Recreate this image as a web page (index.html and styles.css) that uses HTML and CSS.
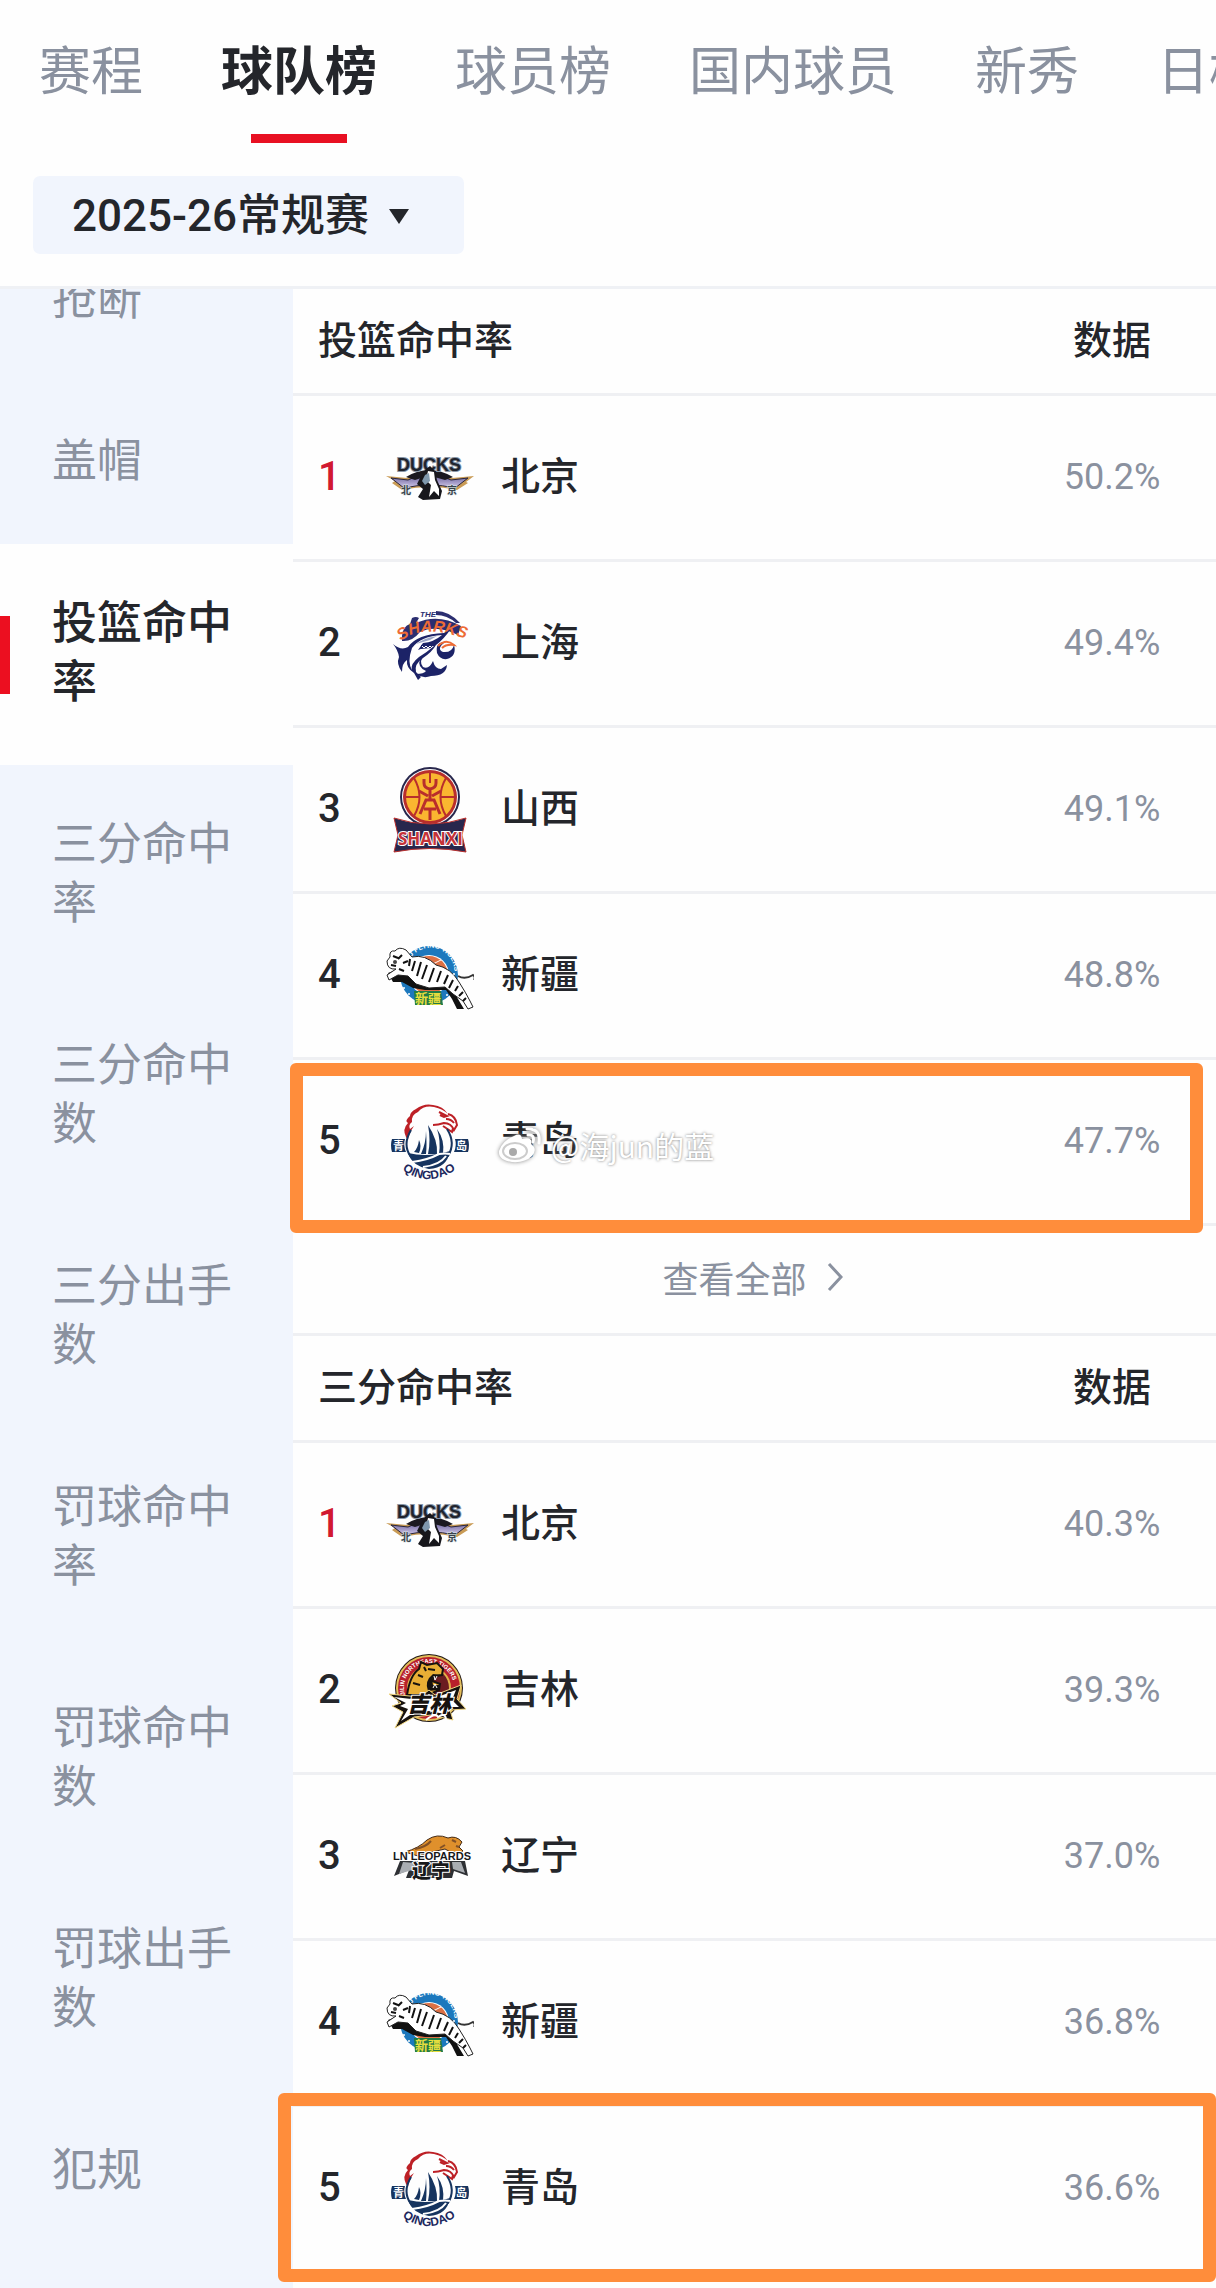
FILE: index.html
```html
<!DOCTYPE html>
<html lang="zh-CN">
<head>
  <meta charset="UTF-8" />
  <meta name="viewport" content="width=device-width, initial-scale=1.0"/>
  <title>球队榜</title>
  <link rel="stylesheet" href="styles.css">
</head>
<body>
  <header class="top">
    <nav class="tabs">
      <a href="#schedule">赛程</a>
      <a href="#teams" class="active">球队榜</a>
      <a href="#players">球员榜</a>
      <a href="#domestic">国内球员</a>
      <a href="#rookies">新秀</a>
      <a href="#daily">日榜</a>
    </nav>
    <div class="season">
      <select name="season" aria-label="赛季">
        <option>2025-26常规赛</option>
      </select>
    </div>
  </header>

  <div class="content">
    <nav class="sidebar">
      <a href="#steals" class="first">抢断</a>
      <a href="#blocks">盖帽</a>
      <a href="#fg" class="active">投篮命中率</a>
      <a href="#tp">三分命中率</a>
      <a href="#tpm">三分命中数</a>
      <a href="#tpa">三分出手数</a>
      <a href="#ft">罚球命中率</a>
      <a href="#ftm">罚球命中数</a>
      <a href="#fta">罚球出手数</a>
      <a href="#fouls">犯规</a>
    </nav>

    <main class="boards">
      <table id="fg">
        <colgroup><col class="col-rank"><col class="col-logo"><col><col class="col-value"></colgroup>
        <thead>
          <tr><th colspan="3" scope="col">投篮命中率</th><th class="value" scope="col">数据</th></tr>
        </thead>
        <tbody>
          <tr>
            <td class="rank top1">1</td>
            <td class="logo">
              <svg viewBox="0 0 88 88">
                <defs>
                  <linearGradient id="wing" x1="0" y1="0" x2="0" y2="1">
                    <stop offset="0" stop-color="#5d5590"/>
                    <stop offset="1" stop-color="#d3c9ec"/>
                  </linearGradient>
                </defs>
                <g id="beijing">
                  <path d="M0 42 L21 44 Q43 30 66 44 L88 42 L80 48 L82 49 L71 56 Q44 50 16 56 L6 49 L9 47 Z" fill="#c99b55"/>
                  <path d="M5 44 L22 46 Q43 34 65 46 L82 44 L69 54 Q44 48 18 54 Z" fill="url(#wing)" stroke="#29253b"/>
                  <path d="M20 43 Q43 29 67 43 L59 46 Q43 40 29 46 Z" fill="#1b1920"/>
                  <text x="11" y="37" class="logo-text ducks">DUCKS</text>
                  <path d="M39 36 L44 32 L49 37 L51 46 L56 57 L54 65 L37 66 L32 63 L37 55 L31 50 L35 42 Z" fill="#17171c"/>
                  <path d="M42 37 L48 38 L49 46 L53 55 L53 62 L48 57 L43 63 L45 51 L40 46 Z" fill="#fff"/>
                  <path d="M39 41 L43 39 L44 47 L39 51 L36 47 Z" fill="#7f98ad"/>
                  <text x="15" y="60" class="logo-text ducks-cn">北</text>
                  <text x="61" y="60" class="logo-text ducks-cn">京</text>
                </g>
              </svg>
            </td>
            <td class="team">北京</td>
            <td class="value">50.2%</td>
          </tr>
          <tr>
            <td class="rank">2</td>
            <td class="logo">
              <svg viewBox="0 0 88 88">
                <path id="sharkArc" d="M15 41 Q36 23 84 40" fill="none"/>
                <text x="34" y="17" class="logo-text sharks-top">THE</text>
                <path d="M50 11 Q63 11 74 23 L70 23 Q61 15 50 15 Z" fill="#2b2e70"/>
                <path d="M16 36 Q17 26 24 24 L26 18 Q30 16 33 18 L30 23 Q52 13 75 26 L72 35 Q50 24 34 32 Q26 42 16 41 Z" fill="#2b2e70"/>
                <text class="logo-text sharks"><textPath href="#sharkArc">SHARKS</textPath></text>
                <path d="M7 44 Q15 51 22 47 Q31 34 58 33 L64 30 Q58 39 50 45 Q46 52 37 58 Q28 64 30 72 L35 77 L32 80 L28 73 Q20 68 21 60 Q16 63 16 72 Q10 64 13 57 Q12 50 7 44 Z" fill="#1c2367"/>
                <path d="M26 48 Q35 36 56 35 Q48 42 37 43 L32 50 Q42 46 48 46 Q40 53 33 57 Q24 64 26 70 Q21 62 26 48 Z" fill="#fff"/>
                <path d="M30 44 Q38 38 51 36 L44 40 Z" fill="#9ba5c6"/>
                <path d="M35 45 L48 43 L45 48 L35 49 Z" fill="#1c2367"/>
                <path d="M36 46 l2 2 l2 -2 l2 2 l2 -2 l2 2" fill="none" stroke="#fff"/>
                <path d="M40 53 Q32 61 37 67 Q43 70 47 61 Q49 69 55 69 L61 65 Q60 76 45 76 Q37 79 30 74 Q38 74 40 71 Q31 67 34 59 Z" fill="#1c2367"/>
                <path d="M51 53 Q49 42 59 42 Q50 49 57 52 Q66 53 68 45 Q71 56 61 59 Q54 60 51 53 Z" fill="#1c2367"/>
                <path d="M52 46 Q60 38 68 45 Q60 44 56 48" fill="none" stroke="#ed6c35" stroke-width="2"/>
              </svg>
            </td>
            <td class="team">上海</td>
            <td class="value">49.4%</td>
          </tr>
          <tr>
            <td class="rank">3</td>
            <td class="logo">
              <svg viewBox="0 0 88 88">
                <circle cx="44" cy="31" r="30" fill="#28274d"/>
                <circle cx="44" cy="31" r="28" fill="#fff"/>
                <circle cx="44" cy="31" r="27" fill="#b92e2c"/>
                <circle cx="44" cy="31" r="24" fill="#fab630"/>
                <g fill="none" stroke="#b92e2c" stroke-width="2">
                  <path d="M20 31 H34 M54 31 H68 M44 7 V17 M28 12 Q39 31 28 50 M60 12 Q49 31 60 50"/>
                  <path d="M38 13 V17 Q38 22 44 23 Q50 22 50 17 V13 M33 25 L42 30 M55 25 L46 30 M44 23 V34" stroke-width="3"/>
                  <path d="M34 48 L40 34 H48 L54 48 M38 43 H50 M44 43 V54" stroke-width="3"/>
                </g>
                <path d="M8 52 Q44 64 80 52 L76 69 L80 86 Q44 79 8 86 L12 69 Z" fill="#28274d" stroke="#b92e2c"/>
                <text x="12" y="79" class="logo-text shanxi-text">SHANXI</text>
              </svg>
            </td>
            <td class="team">山西</td>
            <td class="value">49.1%</td>
          </tr>
          <tr>
            <td class="rank">4</td>
            <td class="logo">
              <svg viewBox="0 0 88 88">
                <g id="xinjiang">
                  <circle cx="43" cy="43" r="29" fill="#1c78bd"/>
                  <circle cx="43" cy="43" r="20" fill="#fff"/>
                  <circle cx="43" cy="43" r="19" fill="#dd7044"/>
                  <path d="M26 34 Q43 31 61 49 M34 25 Q50 34 54 58 M27 53 Q39 34 55 28" fill="none" stroke="#fff"/>
                  <path id="tigerArc" d="M23 29 A24 24 0 0 1 67 48" fill="none"/>
                  <text class="logo-text tigers"><textPath href="#tigerArc">XJ FLYING TIGERS</textPath></text>
                  <path d="M2 41 L18 35 L34 50 L54 50 L66 56 L72 67 L78 77 L71 77 L66 67 L60 58 L39 58 L27 56 L16 50 L7 50 Z" fill="#111"/>
                  <path d="M4 25 Q3 18 9 19 Q13 14 20 18 L26 25 Q39 22 50 33 Q65 36 73 50 Q80 61 84 69 L87 75 L82 77 L77 69 L67 62 L59 55 L43 56 L30 52 L22 44 L12 43 L3 48 L1 43 L10 37 Q1 38 1 29 Z" fill="#fff" stroke="#222"/>
                  <path d="M72 44 Q79 48 87 43 Q90 45 88 48" fill="none" stroke="#333" stroke-width="2"/>
                  <path d="M7 24 L12 26 M16 23 L12 27 M5 33 L10 34 M17 31 L22 29 M24 27 L23 34 M29 29 L26 39 M35 30 L31 44 M41 33 L36 47 M48 36 L43 50 M55 39 L51 50 M62 43 L58 52 M67 48 L63 56 M72 54 L69 59 M77 60 L73 64 M80 66 L77 69 M13 37 L18 39" stroke="#111" stroke-width="2" fill="none"/>
                  <circle cx="9" cy="30" r="2" fill="#444"/>
                  <path d="M28 59 H55 L57 73 H29 Z" fill="#207b47"/>
                  <text x="29" y="71" class="logo-text tigers-cn">新疆</text>
                  <g fill="#fff"><circle cx="18" cy="56" r="1"/><circle cx="23" cy="62" r="1"/><circle cx="68" cy="42" r="1"/><circle cx="61" cy="63" r="1"/></g>
                </g>
              </svg>
            </td>
            <td class="team">新疆</td>
            <td class="value">48.8%</td>
          </tr>
          <tr class="marked">
            <td class="rank">5</td>
            <td class="logo">
              <svg viewBox="0 0 88 88">
                <g id="qingdao">
                  <path d="M20 39 Q16 31 22 25 Q18 23 24 18 Q24 14 30 11 Q38 5 47 7 Q57 8 62 16 Q57 11 48 9 Q38 7 32 14 Q25 17 26 24 Q22 27 24 31 L28 28 Q23 35 22 42 Z" fill="#bd2026"/>
                  <path d="M53 14 L61 18 L58 19 L54 17 M62 16 Q70 18 71 27 L68 32 Q65 25 58 25 Q52 27 47 27 M60 21 Q65 21 68 25 M57 28 L66 34 L67 30" fill="none" stroke="#bd2026" stroke-width="2"/>
                  <path d="M25 32 Q16 47 25 59 Q44 71 62 58 Q70 45 61 31" fill="none" stroke="#16345f" stroke-width="2"/>
                  <path d="M42 27 Q52 42 51 56 H42 Q45 43 42 27 Z M40 33 Q41 47 40 56 H35 Q40 45 40 33 Z M51 31 Q59 42 57 56 H53 Q55 43 51 31 Z M33 42 Q36 48 33 55 L28 54 Q32 50 33 42 Z" fill="#16345f"/>
                  <path d="M22 55 Q42 60 64 53 Q61 70 43 71 Q26 68 22 55 Z" fill="#16345f"/>
                  <path d="M26 64 Q42 62 53 56 Q60 55 64 56 M37 69 Q54 67 60 58" fill="none" stroke="#fff" stroke-width="2"/>
                  <path d="M6 41 H19 Q17 47 20 54 H6 Q4 47 6 41 Z M69 41 H82 Q84 47 82 54 H68 Q71 47 69 41 Z" fill="#16345f"/>
                  <text x="7" y="52" class="logo-text eagle-cn">青</text>
                  <text x="70" y="52" class="logo-text eagle-cn">岛</text>
                  <path id="eagleArc" d="M14 70 Q43 93 75 68" fill="none"/>
                  <text class="logo-text eagle"><textPath href="#eagleArc" startOffset="3">QINGDAO</textPath></text>
                </g>
              </svg>
            </td>
            <td class="team">青岛
              <span class="watermark">
                <svg viewBox="0 0 46 40">
                  <path d="M18 11 Q25 7 26 14 Q37 11 35 19 Q42 24 36 31 Q29 38 16 37 Q2 35 3 26 Q6 16 18 11 Z" fill="#fff"/>
                  <ellipse cx="19" cy="26" rx="12" ry="8" fill="#fff" stroke="#ccc" stroke-width="2"/>
                  <circle cx="17" cy="27" r="4" fill="#aaa"/>
                  <path d="M31 4 Q45 3 43 18 M32 10 Q39 9 37 17" fill="none" stroke="#fff" stroke-width="3" stroke-linecap="round"/>
                </svg>
                @海jun的蓝
              </span>
            </td>
            <td class="value">47.7%<span class="frame"></span></td>
          </tr>
        </tbody>
      </table>

      <a href="#all" class="more">查看全部
        <svg viewBox="0 0 16 30"><path d="M2 2 L14 15 L2 28" fill="none" stroke="currentColor" stroke-width="3"/></svg>
      </a>

      <table id="tp">
        <colgroup><col class="col-rank"><col class="col-logo"><col><col class="col-value"></colgroup>
        <thead>
          <tr><th colspan="3" scope="col">三分命中率</th><th class="value" scope="col">数据</th></tr>
        </thead>
        <tbody>
          <tr>
            <td class="rank top1">1</td>
            <td class="logo"><svg viewBox="0 0 88 88"><use href="#beijing"/></svg></td>
            <td class="team">北京</td>
            <td class="value">40.3%</td>
          </tr>
          <tr>
            <td class="rank">2</td>
            <td class="logo">
              <svg viewBox="0 0 88 88">
                <circle cx="43" cy="41" r="34" fill="#211713"/>
                <circle cx="43" cy="41" r="33" fill="#e3bd5a"/>
                <circle cx="43" cy="41" r="31" fill="#b8202b"/>
                <circle cx="43" cy="41" r="22" fill="#e0b149"/>
                <circle cx="43" cy="41" r="20" fill="#6b1c21"/>
                <path id="jilinArc" d="M19 48 A25 25 0 1 1 67 48" fill="none"/>
                <text class="logo-text jilin-ring"><textPath href="#jilinArc">JILIN NORTHEAST TIGERS</textPath></text>
                <path d="M21 48 Q24 28 33 22 L35 15 L41 18 L51 16 L57 22 L56 28 L49 29 L46 34 L54 37 L53 43 L42 48 Z" fill="#e9ae35" stroke="#17120f" stroke-width="2"/>
                <path d="M27 36 L34 38 M32 28 L37 30 M42 22 L49 23 M38 20 L40 24" fill="none" stroke="#17120f" stroke-width="2"/>
                <path d="M56 28 L47 27 Q38 34 42 44 L53 43 L54 38 L47 38 L46 32 Z" fill="#17120f"/>
                <path d="M48 29 L49 33 L51 29 M47 41 L49 37 L51 41" fill="none" stroke="#fff"/>
                <path d="M3 47 L34 50 L43 43 L49 48 L75 38 L71 52 L80 62 L64 63 L67 73 L45 68 L28 70 L9 81 L17 65 L6 59 L15 56 Z" fill="#17120f" stroke="#f1d783"/>
                <path d="M8 50 L34 53 L43 47 L49 51 L70 43 L66 53 L73 60 L58 60 L59 67 L43 64 L27 66 L15 74 L22 62 L14 59 L20 56 Z" fill="#fff"/>
                <text x="21" y="65" class="logo-text jilin-cn">吉林</text>
                <path d="M40 73 Q50 65 52 70 Q59 65 60 72" fill="none" stroke="#fff" stroke-width="2"/>
              </svg>
            </td>
            <td class="team">吉林</td>
            <td class="value">39.3%</td>
          </tr>
          <tr>
            <td class="rank">3</td>
            <td class="logo">
              <svg viewBox="0 0 88 88">
                <path d="M19 39 Q33 35 41 27 Q51 20 62 25 Q70 22 76 29 L73 34 L77 38 L70 42 L59 36 L46 39 L32 43 Z" fill="#df902c" stroke="#432b18"/>
                <path d="M29 36 Q40 34 45 28 M54 35 L59 32 M66 27 L70 29 M70 33 L73 34" fill="none" stroke="#825126" stroke-width="2"/>
                <path d="M14 48 H79 L82 63 L68 58 L66 65 H20 L23 57 L8 63 Z" fill="#2e3034"/>
                <path d="M17 49 L29 50 L26 57 L13 61 Z M66 49 H75 L79 60 L67 56 Z" fill="#a9adb2"/>
                <text x="7" y="47" class="logo-text leopards">LN LEOPARDS</text>
                <text x="26" y="65" class="logo-text leopards-cn">辽宁</text>
              </svg>
            </td>
            <td class="team">辽宁</td>
            <td class="value">37.0%</td>
          </tr>
          <tr>
            <td class="rank">4</td>
            <td class="logo"><svg viewBox="0 0 88 88"><use href="#xinjiang"/></svg></td>
            <td class="team">新疆</td>
            <td class="value">36.8%</td>
          </tr>
          <tr class="marked">
            <td class="rank">5</td>
            <td class="logo"><svg viewBox="0 0 88 88"><use href="#qingdao"/></svg></td>
            <td class="team">青岛</td>
            <td class="value">36.6%<span class="frame wide"></span></td>
          </tr>
        </tbody>
      </table>
    </main>
  </div>
</body>
</html>
```
FILE: styles.css
```css
* { box-sizing: border-box; }
body { margin: 0; min-height: 100vh; display: flex; flex-direction: column; background: #fefefe; color: #24262b; font-family: Roboto, "Noto Sans CJK SC", sans-serif; }
a { color: inherit; text-decoration: none; }

/* Header */
.top { border-bottom: 3px solid #eff1f5; }
.tabs { display: flex; gap: 78px; height: 143px; padding-left: 39px; overflow: hidden; color: #8a919f; font-size: 52px; line-height: 146px; white-space: nowrap; }
.tabs a { flex: none; position: relative; height: 143px; }
.tabs .active { color: #24262b; font-weight: bold; }
.tabs .active::after { content: ""; position: absolute; left: 50%; bottom: 0; width: 96px; height: 9px; margin-left: -48px; background: #e81022; }
.season { position: relative; width: 431px; margin: 33px 0 32px 33px; }
.season select { display: block; width: 100%; height: 78px; padding: 2px 0 0 39px; border: 0; border-radius: 7px; background: #f1f5fd; color: #24262b; font: 500 44px Roboto, "Noto Sans CJK SC", sans-serif; appearance: none; }
.season::after { content: ""; position: absolute; right: 55px; top: 33px; border: 10px solid transparent; border-top: 15px solid #24262b; border-bottom: 0; pointer-events: none; }

.content { flex: 1; display: flex; }

/* Left menu, scrolled a little */
.sidebar { flex: none; width: 293px; overflow: hidden; background: #f1f5fd; color: #8a919f; font-size: 45px; line-height: 59px; }
.sidebar a { display: block; position: relative; padding: 50px 60px 53px 52px; }
.sidebar .first { margin-top: -69px; }
.sidebar .active { background: #fefefe; color: #24262b; font-weight: 500; }
.sidebar .active::before { content: ""; position: absolute; left: 0; top: 72px; width: 10px; height: 78px; background: #ec0f20; }

/* Rankings */
.boards { flex: 1; min-width: 0; }
table { width: 100%; table-layout: fixed; border-spacing: 0; font-size: 39px; }
.col-rank { width: 93px; }
.col-logo { width: 115px; }
.col-value { width: 208px; }
th, td { padding: 0; border-bottom: 3px solid #eff0f3; text-align: left; font-weight: 500; }
th { height: 107px; padding-left: 25px; line-height: 56px; }
td { height: 166px; }
th.value { padding: 0; text-align: center; }
.rank { padding: 0 0 2px 25px; font-size: 40px; }
.top1 { color: #d11930; }
.team { padding-bottom: 9px; }
.logo svg { display: block; width: 88px; height: 88px; }
td.value { padding-bottom: 2px; color: #8a919f; font-size: 36px; font-weight: 400; text-align: center; }
.more { display: flex; justify-content: center; align-items: center; gap: 20px; height: 110px; padding: 0 4px 6px 0; border-bottom: 3px solid #eff0f3; color: #8a919f; font-size: 36px; }
.more svg { width: 16px; height: 30px; }

.marked { position: relative; }
.frame { position: absolute; inset: 3px 13px -7px -3px; border: 13px solid #ff8d3b; border-radius: 6px; }
.frame.wide { inset: -14px 0 -9px -15px; }
.watermark { position: absolute; left: 203px; top: 64px; display: flex; align-items: center; gap: 9px; color: #fff; font: 30px/42px "Noto Sans CJK SC", sans-serif; text-shadow: 0 0 3px #777; white-space: nowrap; }
.watermark svg { width: 46px; height: 40px; filter: drop-shadow(0 0 2px #888); }

/* Lettering inside the logos */
.logo-text { font-family: "Liberation Sans", "Noto Sans CJK SC", sans-serif; font-weight: bold; paint-order: stroke; }
.ducks { font-size: 18px; fill: #20242d; stroke: #8995a5; stroke-width: 2px; }
.ducks-cn { font-size: 10px; fill: #39434c; stroke: #d8e2e4; stroke-width: 1px; }
.sharks-top { font-size: 8px; font-style: italic; fill: #2b2e70; }
.sharks { font-size: 16px; font-style: italic; fill: #ed6c35; }
.shanxi-text { font-family: "Open Sans", sans-serif; font-size: 17px; fill: #c53338; stroke: #fff; stroke-width: 2px; }
.tigers { font-size: 7px; fill: #fff; }
.tigers-cn { font-size: 13px; fill: #e8df3e; }
.eagle { font-size: 12px; fill: #20275d; }
.eagle-cn { font-size: 11px; fill: #fff; }
.jilin-ring { font-size: 6px; fill: #fff; }
.jilin-cn { font-size: 22px; font-style: italic; font-weight: 900; fill: #17120f; stroke: #fff; stroke-width: 2px; }
.leopards { font-size: 11px; fill: #17181a; stroke: #fff; stroke-width: 2px; }
.leopards-cn { font-size: 19px; font-weight: 900; fill: #17181a; stroke: #fff; stroke-width: 2px; }
```
